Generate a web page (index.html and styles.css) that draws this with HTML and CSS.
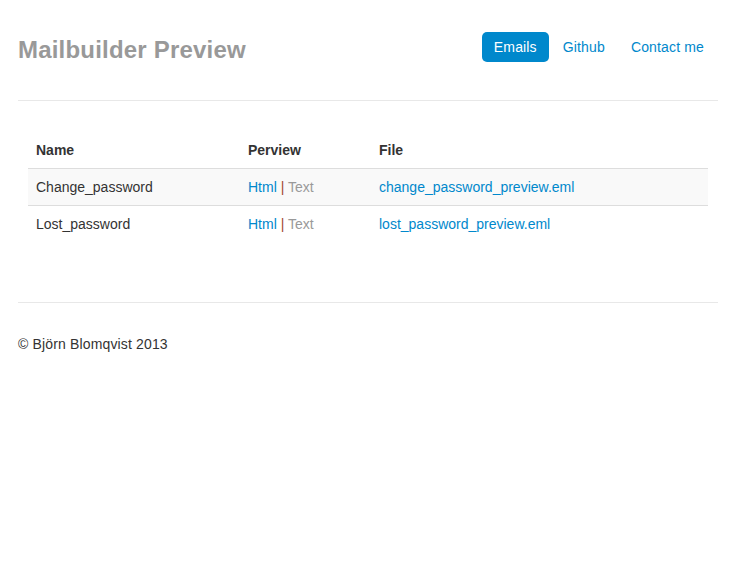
FILE: index.html
```html
<!DOCTYPE html>
<html>
<head>
<meta charset="utf-8">
<title>Mailbuilder Preview</title>
<link rel="stylesheet" href="styles.css">
</head>
<body>
<div class="container">
  <header class="header">
    <h3 class="brand">Mailbuilder Preview</h3>
    <ul class="nav-pills">
      <li><a class="active" href="#">Emails</a></li>
      <li><a href="#">Github</a></li>
      <li><a href="#">Contact me</a></li>
    </ul>
  </header>
  <div class="content">
    <table class="table">
      <thead>
        <tr><th class="c-name">Name</th><th class="c-prev">Perview</th><th>File</th></tr>
      </thead>
      <tbody>
        <tr class="odd">
          <td>Change_password</td>
          <td><a href="#">Html</a> <span class="sep">|</span> <span class="muted">Text</span></td>
          <td><a href="#">change_password_preview.eml</a></td>
        </tr>
        <tr>
          <td>Lost_password</td>
          <td><a href="#">Html</a> <span class="sep">|</span> <span class="muted">Text</span></td>
          <td><a href="#">lost_password_preview.eml</a></td>
        </tr>
      </tbody>
    </table>
  </div>
  <footer class="footer">
    <p>© Björn Blomqvist 2013</p>
  </footer>
</div>
</body>
</html>
```
FILE: styles.css
```css
* { box-sizing: border-box; }
body {
  margin: 0;
  font-family: "Liberation Sans", Arial, sans-serif;
  font-size: 14px;
  line-height: 20px;
  color: #333;
  background: #fff;
}
a { color: #0088cc; text-decoration: none; }
.container {
  width: 700px;
  margin-left: 18px;
}
.header {
  display: flex;
  justify-content: space-between;
  align-items: center;
  padding: 24px 0 30px;
  border-bottom: 1px solid #e8e8e8;
}
.brand {
  margin: 0;
  padding-top: 6px;
  font-size: 24px;
  line-height: 40px;
  font-weight: bold;
  color: #999;
  letter-spacing: 0.2px;
}
.nav-pills {
  display: flex;
  list-style: none;
  margin: 0 2px 0 0;
  padding: 0;
  gap: 2px;
  letter-spacing: 0.15px;
}
.nav-pills a {
  display: block;
  padding: 8px 12px;
  line-height: 14px;
  border-radius: 5px;
}
.nav-pills a.active {
  background: #0088cc;
  color: #fff;
}
.content {
  padding: 31px 10px 60px;
}
.table {
  width: 100%;
  border-collapse: collapse;
  border-spacing: 0;
}
.table th, .table td {
  padding: 8px;
  text-align: left;
  line-height: 20px;
  vertical-align: top;
}
.table th { font-weight: bold; }
.table td { border-top: 1px solid #ddd; }
.c-name { width: 212px; }
.c-prev { width: 131px; }
.table tr.odd td { background: #f9f9f9; }
.sep { color: #a3472f; }
.muted { color: #999; }
.footer {
  border-top: 1px solid #e8e8e8;
  padding-top: 31px;
}
.footer p { margin: 0; letter-spacing: 0.15px; }
```
